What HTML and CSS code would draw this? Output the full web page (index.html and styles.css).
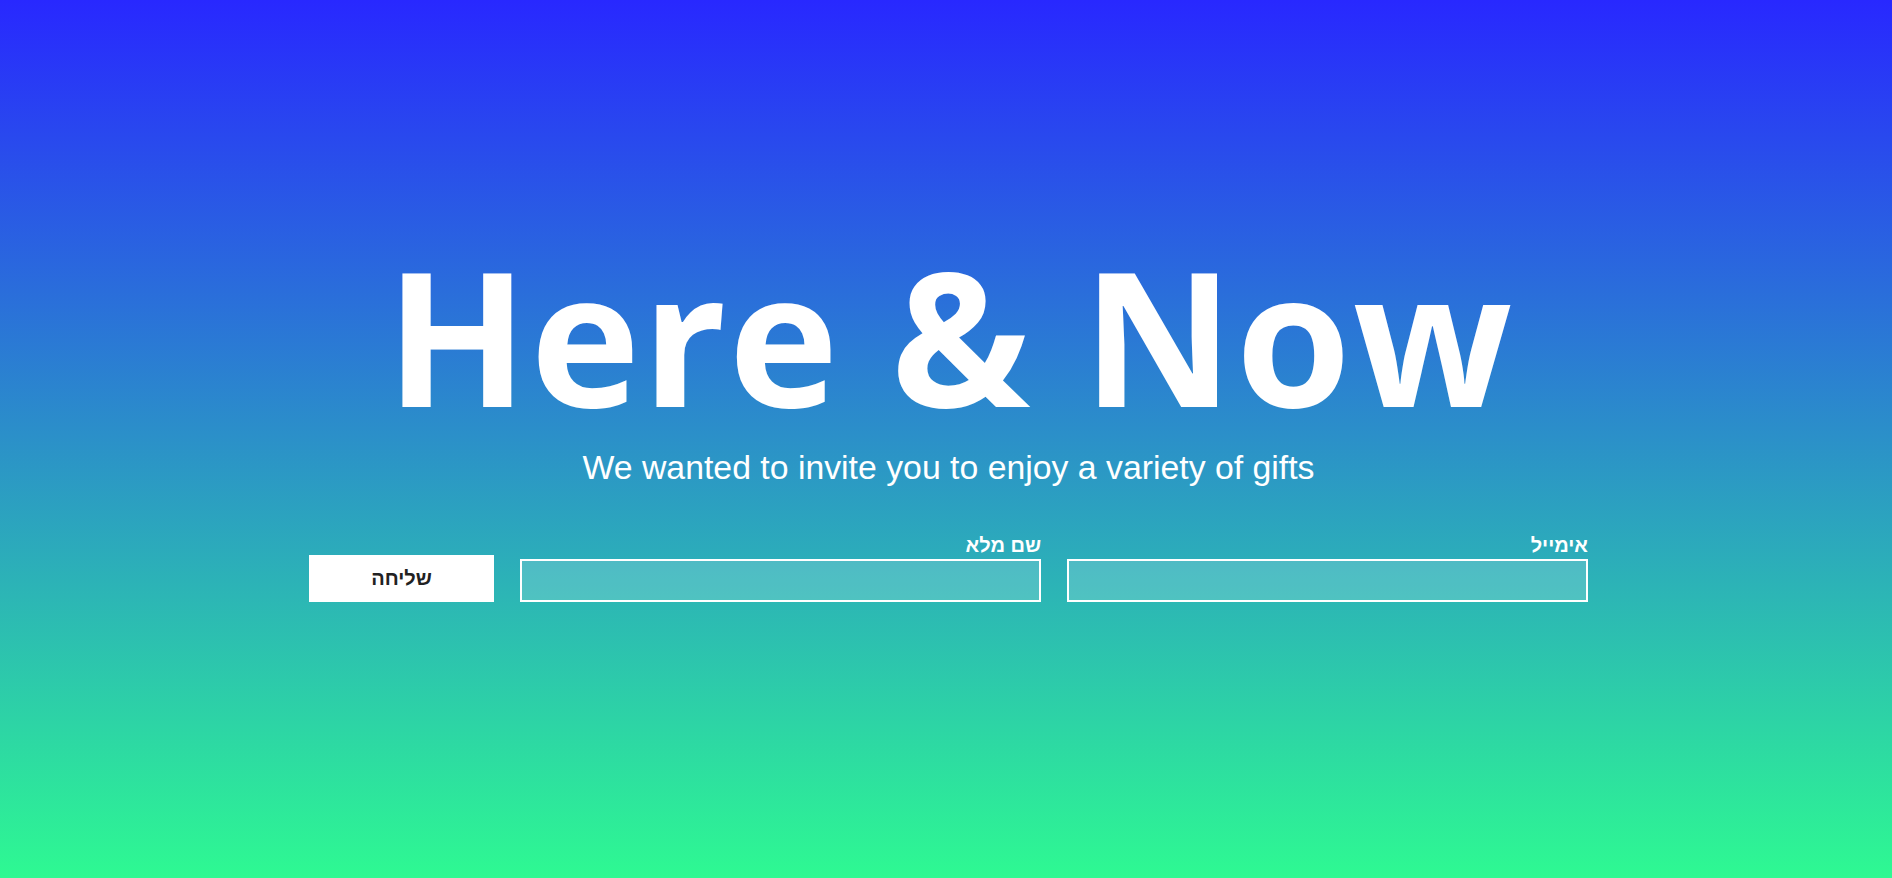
FILE: index.html
```html
<!DOCTYPE html>
<html lang="he">
<head>
<meta charset="utf-8">
<title>Here &amp; Now</title>
<link rel="stylesheet" href="styles.css">
</head>
<body>
<main class="hero">
  <h1 class="hero-title">Here &amp; Now</h1>
  <p class="hero-sub">We wanted to invite you to enjoy a variety of gifts</p>
  <form class="signup" dir="rtl">
    <div class="field field-wide">
      <label class="field-label" for="email">אימייל</label>
      <input class="field-input" id="email" type="email">
    </div>
    <div class="field field-wide">
      <label class="field-label" for="name">שם מלא</label>
      <input class="field-input" id="name" type="text">
    </div>
    <button class="submit" type="button">שליחה</button>
  </form>
</main>
</body>
</html>
```
FILE: styles.css
```css
html, body {
  margin: 0;
  padding: 0;
  height: 100%;
}

body {
  background: linear-gradient(to bottom, #2828ff 0%, #2ef992 100%);
  color: #fff;
  font-family: "Liberation Sans", Arial, sans-serif;
  overflow: hidden;
}

.hero {
  box-sizing: border-box;
  height: 878px;
  padding-top: 242px;
  display: flex;
  flex-direction: column;
  align-items: center;
}

.hero-title {
  margin: 0;
  font-family: "Open Sans", "Liberation Sans", sans-serif;
  font-weight: 700;
  font-size: 186px;
  line-height: 1;
  letter-spacing: 2px;
  padding-left: 8px;
}

.hero-sub {
  margin: 19px 0 0;
  padding-left: 5px;
  font-size: 33.8px;
  line-height: 1.2;
  font-weight: 400;
}

.signup {
  margin-top: 45px;
  width: 1279px;
  padding-left: 5px;
  display: flex;
  align-items: flex-end;
  gap: 26px;
}

.field {
  display: flex;
  flex-direction: column;
  gap: 2px;
}

.field-wide {
  width: 521px;
}

.field-label {
  font-family: "Liberation Sans", Arial, sans-serif;
  font-weight: 700;
  font-size: 20px;
  line-height: 24px;
  color: #fff;
  text-align: right;
}

.field-input {
  box-sizing: border-box;
  height: 43px;
  width: 100%;
  margin: 0;
  border: 2px solid #fff;
  background: rgba(255, 255, 255, 0.17);
  color: #fff;
  font-size: 18px;
  padding: 0 10px;
  outline: none;
}

.submit {
  box-sizing: border-box;
  width: 185px;
  height: 47px;
  border: 0;
  margin: 0;
  background: #fff;
  color: #222;
  font-family: "Liberation Sans", Arial, sans-serif;
  font-size: 20px;
  font-weight: 700;
  cursor: pointer;
}
```
